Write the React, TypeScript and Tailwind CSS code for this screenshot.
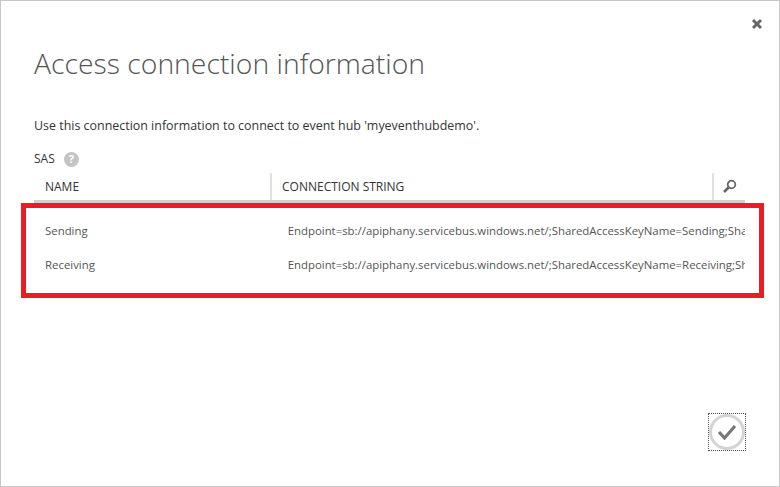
import React from "react";

const rows = [
  {
    name: "Sending",
    value:
      "Endpoint=sb://apiphany.servicebus.windows.net/;SharedAccessKeyName=Sending;SharedAccessKey=abc",
  },
  {
    name: "Receiving",
    value:
      "Endpoint=sb://apiphany.servicebus.windows.net/;SharedAccessKeyName=Receiving;SharedAccessKey=abc",
  },
];

export default function App() {
  return (
    <div className="relative h-[487px] w-[780px] overflow-hidden border border-[#c8c8c8] bg-white font-['Open_Sans',sans-serif] text-[#333]">
      <div className="flex justify-end pr-[16px] pt-[17px]">
        <svg width="12" height="12" viewBox="0 0 12 12">
          <path d="M2 2l8 8M10 2l-8 8" stroke="#666" strokeWidth="3" />
        </svg>
      </div>

      <div className="pl-[33px] pr-[34px]">
        <h1 className="mt-[13px] text-[28.35px] font-light leading-[40px] text-[#555]">
          Access connection information
        </h1>
        <p className="mt-[34px] text-[12.45px] leading-[18px] text-[#333]">
          Use this connection information to connect to event hub 'myeventhubdemo'.
        </p>

        <div className="mt-[15px] flex h-[18px] items-center gap-[9px] text-[12px] text-[#333]">
          <span>SAS</span>
          <span className="flex h-[15px] w-[15px] items-center justify-center rounded-full bg-[#c4c4c4] text-[11px] font-bold text-white">
            ?
          </span>
        </div>

        <div className="mt-[5px] flex h-[30px] border-b-[3px] border-[#d0d0d0] text-[12px] font-medium text-[#333]">
          <div className="flex w-[238px] items-center border-r-2 border-[#e0e0e0] pl-[11px]">NAME</div>
          <div className="flex w-[442px] items-center border-r-2 border-[#e0e0e0] pl-[10px]">
            CONNECTION STRING
          </div>
          <div className="flex flex-1 items-center justify-center">
            <svg width="15" height="15" viewBox="0 0 15 15" fill="none">
              <circle cx="9.5" cy="5.5" r="3.8" stroke="#666" strokeWidth="1.8" />
              <path d="M6.5 8.5L2 13" stroke="#666" strokeWidth="2.6" />
            </svg>
          </div>
        </div>

        <div className="mt-[19px] flex flex-col gap-[16px] text-[11.4px] leading-[18px] text-[#555]">
          {rows.map((r) => (
            <div key={r.name} className="flex">
              <div className="w-[244px] pl-[11px]">{r.name}</div>
              <div className="w-[468px] overflow-hidden whitespace-nowrap pl-[10px]">{r.value}</div>
            </div>
          ))}
        </div>
      </div>

      {/* red callout drawn over the table rows */}
      <div className="absolute left-[20px] top-[202px] h-[95px] w-[743px] border-[5px] border-[#ed1c24]" />

      <div className="absolute left-[707px] top-[412px] flex h-[38px] w-[38px] items-center justify-center border border-dotted border-[#555]">
        <div className="flex h-[36px] w-[36px] items-center justify-center rounded-full border-[3px] border-[#d4d4d4]">
          <svg width="20" height="16" viewBox="0 0 20 16" fill="none">
            <path d="M2 8l5.5 6L18 2" stroke="#777" strokeWidth="3.2" />
          </svg>
        </div>
      </div>
    </div>
  );
}
